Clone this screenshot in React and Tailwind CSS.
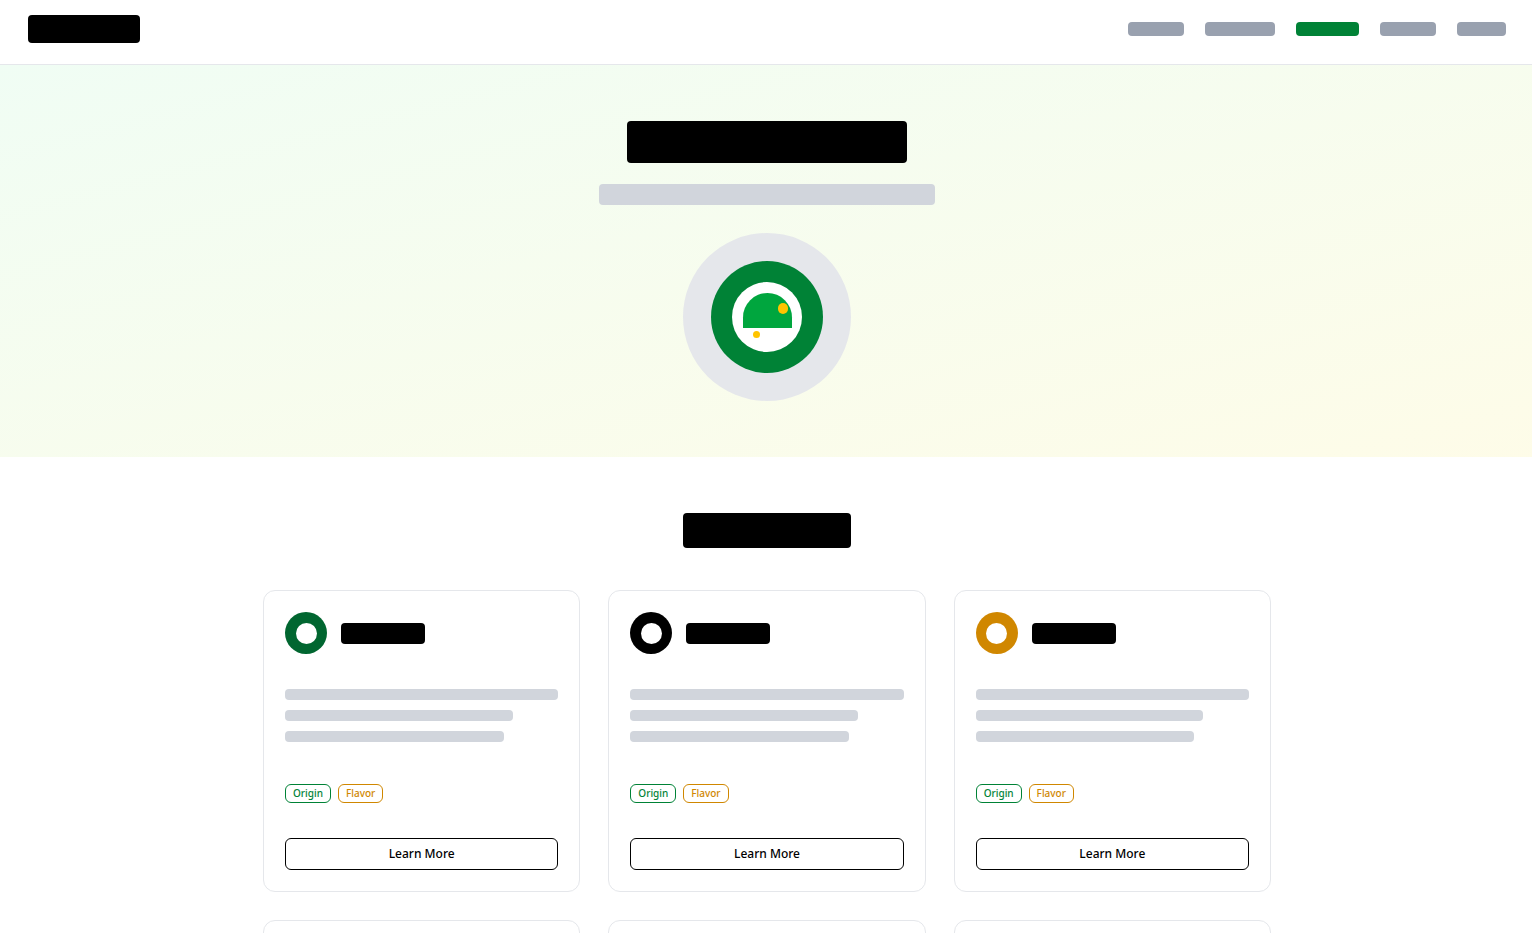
const navItems = [
  { label: "Home", style: "w-14 bg-gray-400" },
  { label: "Products", style: "w-[70px] bg-gray-400" },
  { label: "Varieties", style: "w-[63px] bg-green-700", current: true },
  { label: "Recipes", style: "w-14 bg-gray-400" },
  { label: "About", style: "w-[49px] bg-gray-400" },
];

const rings = [
  "bg-green-800",
  "bg-black",
  "bg-yellow-600",
  "bg-green-800",
  "bg-black",
  "bg-yellow-600",
];

function Tag({ className, children }) {
  return (
    <span
      className={`rounded-md border px-[7px] pb-px text-[10px] leading-4 font-medium ${className}`}
    >
      {children}
    </span>
  );
}

function VarietyCard({ ring }) {
  return (
    <article className="flex flex-col rounded-xl border border-gray-200 bg-white p-[21px]">
      <div className="flex items-center gap-3.5">
        <div className={`flex size-[42px] items-center justify-center rounded-full ${ring}`}>
          <div className="size-[21px] rounded-full bg-white" />
        </div>
        <div className="h-[21px] w-[84px] rounded-[4px] bg-black" />
      </div>
      <div className="mt-[35px] flex flex-col gap-2.5">
        <div className="h-[11px] w-full rounded-[4px] bg-gray-300" />
        <div className="h-[11px] w-5/6 rounded-[4px] bg-gray-300" />
        <div className="h-[11px] w-4/5 rounded-[4px] bg-gray-300" />
      </div>
      <div className="mt-[42px] flex gap-[7px]">
        <Tag className="border-green-700 text-green-700">Origin</Tag>
        <Tag className="border-yellow-600 text-yellow-600">Flavor</Tag>
      </div>
      <button
        type="button"
        className="mt-[35px] h-8 rounded-md border border-black bg-white text-xs font-medium text-black"
      >
        Learn More
      </button>
    </article>
  );
}

function Emblem() {
  return (
    <div className="flex size-[168px] items-center justify-center rounded-full bg-gray-200">
      <div className="flex size-28 items-center justify-center rounded-full bg-green-700">
        <div className="relative size-[70px] rounded-full bg-white pt-[11px]">
          <div className="mx-auto h-[35px] w-[49px] rounded-t-full bg-green-600" />
          <div className="absolute top-[21px] right-3.5 h-[11px] w-2.5 rounded-full bg-[#ffc400]" />
          <div className="absolute bottom-3.5 left-[21px] size-[7px] rounded-full bg-[#ffc400]" />
        </div>
      </div>
    </div>
  );
}

export default function App() {
  return (
    <div className="min-h-screen overflow-x-clip bg-white font-['Noto_Sans','Open_Sans',sans-serif]">
      <div className="-mr-0.5">
        <header className="flex items-center justify-between border-b border-gray-200 bg-white px-7 pt-[15px] pb-[21px]">
          <div className="h-7 w-28 rounded-[4px] bg-black" />
          <nav className="flex gap-[21px]">
            {navItems.map((item) => (
              <a
                key={item.label}
                href="#"
                aria-label={item.label}
                aria-current={item.current ? "page" : undefined}
                className={`h-3.5 rounded-[4px] ${item.style}`}
              />
            ))}
          </nav>
        </header>
        <main>
          <section className="flex flex-col items-center bg-linear-to-br from-green-50 to-yellow-50 py-14">
            <div className="h-[42px] w-[280px] rounded-[4px] bg-black" />
            <div className="mt-[21px] h-[21px] w-[336px] rounded-[4px] bg-gray-300" />
            <div className="mt-7">
              <Emblem />
            </div>
          </section>
          <section className="px-7 py-14">
            <div className="mx-auto h-[35px] w-[168px] rounded-[4px] bg-black" />
            <div className="mx-auto mt-[42px] grid max-w-[1008px] grid-cols-3 gap-7">
              {rings.map((ring, index) => (
                <VarietyCard key={index} ring={ring} />
              ))}
            </div>
          </section>
        </main>
      </div>
    </div>
  );
}
